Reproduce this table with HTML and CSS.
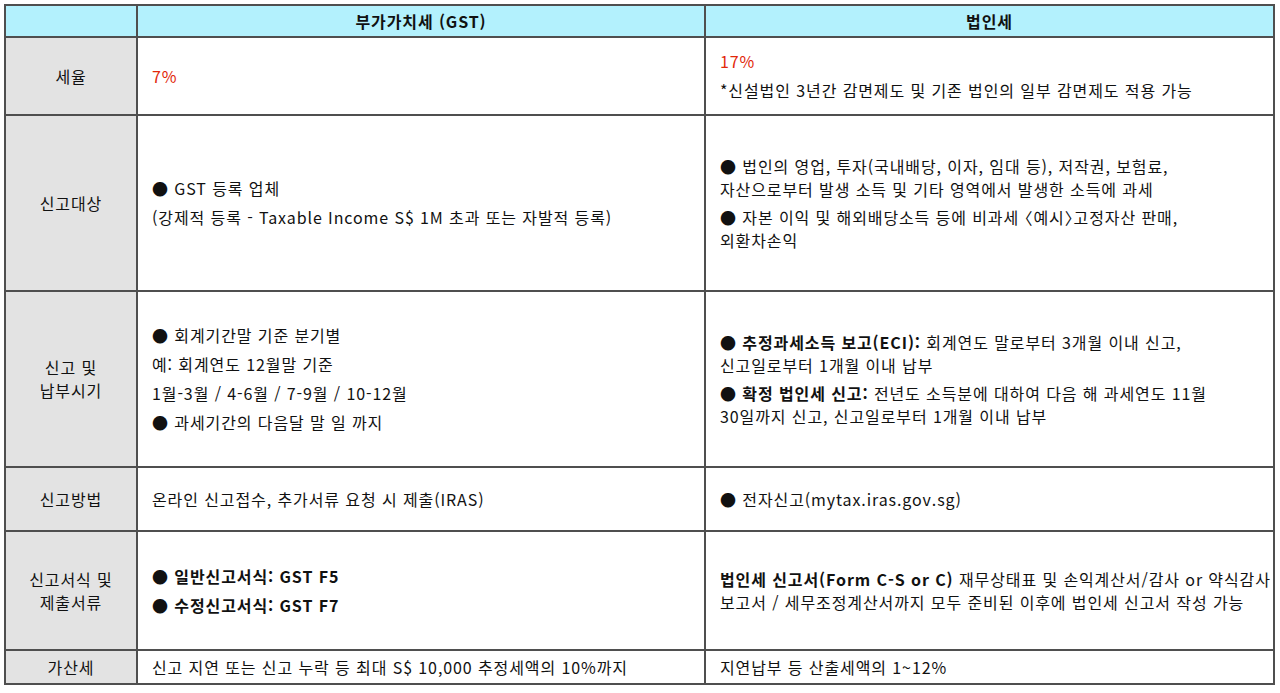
FILE: index.html
```html
<!DOCTYPE html>
<html lang="ko">
<head>
<meta charset="utf-8">
<title>GST / 법인세</title>
<link rel="stylesheet" href="styles.css">
</head>
<body>
<div class="table">
  <div class="cell head"></div>
  <div class="cell head center"><b>부가가치세 (GST)</b></div>
  <div class="cell head center"><b>법인세</b></div>

  <div class="cell label">세율</div>
  <div class="cell"><p class="red">7%</p></div>
  <div class="cell"><p class="red">17%</p><p>*신설법인 3년간 감면제도 및 기존 법인의 일부 감면제도 적용 가능</p></div>

  <div class="cell label">신고대상</div>
  <div class="cell"><p>● GST 등록 업체</p><p>(강제적 등록 - Taxable Income S$ 1M 초과 또는 자발적 등록)</p></div>
  <div class="cell tight"><p>● 법인의 영업, 투자(국내배당, 이자, 임대 등), 저작권, 보험료,<br>자산으로부터 발생 소득 및 기타 영역에서 발생한 소득에 과세</p><p>● 자본 이익 및 해외배당소득 등에 비과세 <span class="ang">〈</span>예시<span class="ang">〉</span>고정자산 판매,<br>외환차손익</p></div>

  <div class="cell label">신고 및<br>납부시기</div>
  <div class="cell"><p>● 회계기간말 기준 분기별</p><p>예: 회계연도 12월말 기준</p><p>1월-3월 / 4-6월 / 7-9월 / 10-12월</p><p>● 과세기간의 다음달 말 일 까지</p></div>
  <div class="cell tight"><p><b>● 추정과세소득 보고(ECI):</b> 회계연도 말로부터 3개월 이내 신고,<br>신고일로부터 1개월 이내 납부</p><p><b>● 확정 법인세 신고:</b> 전년도 소득분에 대하여 다음 해 과세연도 11월<br>30일까지 신고, 신고일로부터 1개월 이내 납부</p></div>

  <div class="cell label">신고방법</div>
  <div class="cell"><p>온라인 신고접수, 추가서류 요청 시 제출(IRAS)</p></div>
  <div class="cell"><p>● 전자신고(mytax.iras.gov.sg)</p></div>

  <div class="cell label">신고서식 및<br>제출서류</div>
  <div class="cell"><p><b>● 일반신고서식: GST F5</b></p><p><b>● 수정신고서식: GST F7</b></p></div>
  <div class="cell"><p><b>법인세 신고서(Form C-S or C)</b> 재무상태표 및 손익계산서/감사 or 약식감사<br>보고서 / 세무조정계산서까지 모두 준비된 이후에 법인세 신고서 작성 가능</p></div>

  <div class="cell label">가산세</div>
  <div class="cell"><p>신고 지연 또는 신고 누락 등 최대 S$ 10,000 추정세액의 10%까지</p></div>
  <div class="cell"><p>지연납부 등 산출세액의 1~12%</p></div>
</div>
</body>
</html>
```

FILE: styles.css
```css
html, body {
  margin: 0;
  padding: 0;
  background: #ffffff;
}
body {
  font-family: "Noto Sans CJK KR", "Noto Sans", sans-serif;
  font-size: 16px;
  letter-spacing: 0.9px;
  color: #111111;
}
.table {
  margin: 4px 0 0 4px;
  width: 1271px;
  box-sizing: border-box;
  display: grid;
  grid-template-columns: 130px 566px 567px;
  grid-template-rows: 30px 76px 174px 174px 62px 117px 32px;
  gap: 2px;
  padding: 2px;
  background: #4f4f4f;
}
.cell {
  background: #ffffff;
  display: flex;
  flex-direction: column;
  justify-content: center;
  padding: 0 6px 0 14px;
  line-height: 23px;
  white-space: nowrap;
}
.cell p {
  margin: 0;
}
.cell p + p {
  margin-top: 6px;
}
.cell.tight p + p {
  margin-top: 5px;
}
.head {
  background: #b3f1fd;
}
.center {
  align-items: center;
  padding: 0;
}
.label {
  background: #e3e3e3;
  align-items: center;
  text-align: center;
  padding: 0;
}
.red {
  color: #e2280a;
}
.ang {
  font-feature-settings: "halt" 1;
}
b {
  font-weight: 700;
}
```
